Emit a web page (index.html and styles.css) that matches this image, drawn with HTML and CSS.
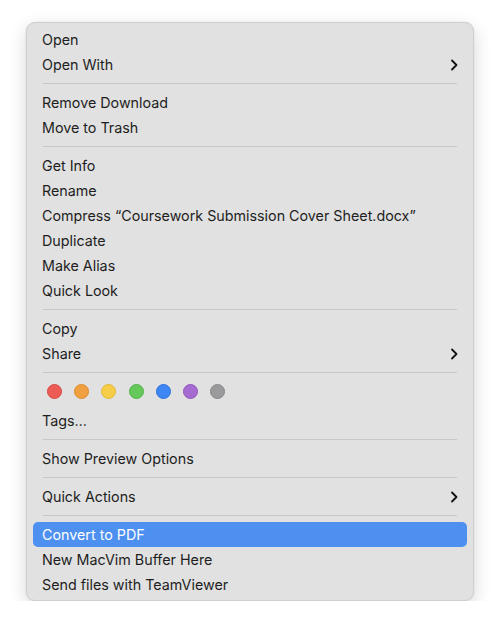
FILE: index.html
```html
<!DOCTYPE html>
<html>
<head>
<meta charset="utf-8">
<link rel="stylesheet" href="styles.css">
</head>
<body>
<div class="menu">
  <div class="item">Open</div>
  <div class="item">Open With<svg class="chev" viewBox="0 0 8 12"><path d="M2 1.5 L6.5 6 L2 10.5"/></svg></div>
  <div class="sep"></div>
  <div class="item">Remove Download</div>
  <div class="item">Move to Trash</div>
  <div class="sep"></div>
  <div class="item">Get Info</div>
  <div class="item">Rename</div>
  <div class="item">Compress “Coursework Submission Cover Sheet.docx”</div>
  <div class="item">Duplicate</div>
  <div class="item">Make Alias</div>
  <div class="item">Quick Look</div>
  <div class="sep"></div>
  <div class="item">Copy</div>
  <div class="item">Share<svg class="chev" viewBox="0 0 8 12"><path d="M2 1.5 L6.5 6 L2 10.5"/></svg></div>
  <div class="sep"></div>
  <div class="tags">
    <span class="dot red"></span>
    <span class="dot orange"></span>
    <span class="dot yellow"></span>
    <span class="dot green"></span>
    <span class="dot blue"></span>
    <span class="dot purple"></span>
    <span class="dot gray"></span>
  </div>
  <div class="item">Tags…</div>
  <div class="sep"></div>
  <div class="item">Show Preview Options</div>
  <div class="sep"></div>
  <div class="item">Quick Actions<svg class="chev" viewBox="0 0 8 12"><path d="M2 1.5 L6.5 6 L2 10.5"/></svg></div>
  <div class="sep"></div>
  <div class="item active">Convert to PDF</div>
  <div class="item">New MacVim Buffer Here</div>
  <div class="item">Send files with TeamViewer</div>
</div>
</body>
</html>
```

FILE: styles.css
```css
html, body {
  margin: 0;
  padding: 0;
  background: #ffffff;
}
body {
  padding: 22px 0 0 26px;
  font-family: Inter, "Noto Sans", sans-serif;
}
.menu {
  width: 448px;
  box-sizing: border-box;
  background: #e1e1e1;
  border: 1px solid #cfcfcf;
  border-radius: 9px;
  padding: 4px 6px 3px;
  box-shadow: 0 6px 18px rgba(0,0,0,0.16), 0 0 2px rgba(0,0,0,0.08);
  display: flex;
  flex-direction: column;
}
.item {
  height: 25px;
  display: flex;
  align-items: center;
  justify-content: space-between;
  padding: 0 9px 0 9px;
  font-size: 14.3px;
  color: #1e1e1e;
  border-radius: 5px;
}
.item.active {
  background: #4d90f0;
  color: #ffffff;
}
.chev {
  width: 8px;
  height: 12px;
  fill: none;
  stroke: #111;
  stroke-width: 1.8;
  stroke-linecap: round;
  stroke-linejoin: round;
}
.sep {
  height: 13px;
  display: flex;
  align-items: center;
  padding: 0 10px;
}
.sep::before {
  content: "";
  flex: 1;
  height: 1px;
  background: #c8c8c8;
}
.tags {
  height: 29px;
  display: flex;
  align-items: flex-start;
  gap: 12.2px;
  padding: 5px 14px 0 14px;
  box-sizing: border-box;
}
.dot {
  width: 15px;
  height: 15px;
  box-sizing: border-box;
  border-radius: 50%;
  border: 1px solid rgba(0,0,0,0.08);
}
.red { background: #ec5c55; border-color: #d54a44; }
.orange { background: #f0a040; border-color: #dc8c2c; }
.yellow { background: #f5cd48; border-color: #e2b935; }
.green { background: #66c75b; border-color: #52b448; }
.blue { background: #3e86f3; border-color: #2c72df; }
.purple { background: #a56bd0; border-color: #9158bd; }
.gray { background: #9a9a9c; border-color: #87878a; }
```
